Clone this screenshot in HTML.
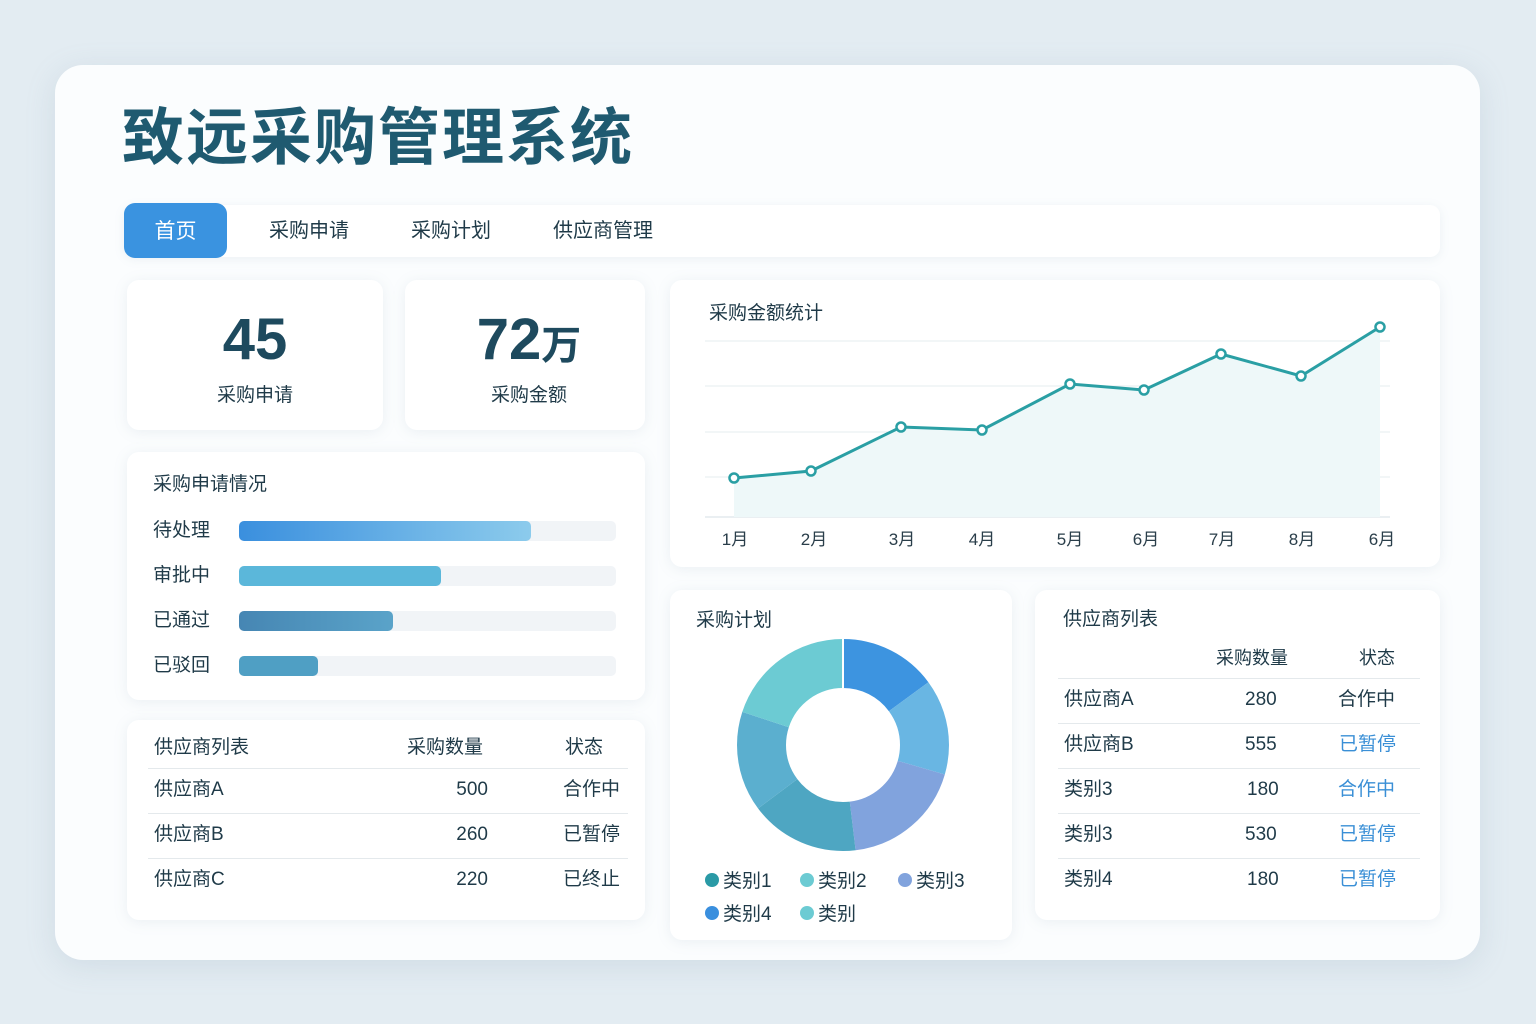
<!DOCTYPE html>
<html><head><meta charset="utf-8"><style>
*{margin:0;padding:0;box-sizing:border-box}
body{width:1536px;height:1024px;background:#e3ecf2;font-family:"Liberation Sans","Noto Sans CJK SC",sans-serif;color:#1f3f50;position:relative;overflow:hidden}
.main{position:absolute;left:55px;top:65px;width:1425px;height:895px;background:#fbfdfe;border-radius:28px;box-shadow:0 6px 30px rgba(120,150,170,.18)}
.card{position:absolute;background:#fff;border-radius:12px;box-shadow:0 2px 14px rgba(120,150,170,.13)}
.abs{position:absolute;line-height:24px}
.t{font-size:19px;color:#1f3a48}
</style></head><body>
<div class="main"></div>
<div class="abs" style="left:122px;top:104px;font-size:62px;line-height:70px;font-weight:bold;color:#1f5a70;letter-spacing:2px">致远采购管理系统</div>
<div class="abs" style="left:124px;top:205px;width:1316px;height:52px;background:#fff;border-radius:10px;box-shadow:0 2px 10px rgba(120,150,170,.12)"></div>
<div class="abs" style="left:124px;top:203px;width:103px;height:55px;background:#3a93e0;border-radius:11px;color:#fff;font-size:21px;text-align:center;line-height:57px">首页</div>
<div class="abs t" style="left:269px;top:219px;font-size:20px">采购申请</div>
<div class="abs t" style="left:411px;top:219px;font-size:20px">采购计划</div>
<div class="abs t" style="left:553px;top:219px;font-size:20px">供应商管理</div>

<div class="card" style="left:127px;top:280px;width:256px;height:150px"></div>
<div class="abs" style="left:127px;top:310px;width:256px;text-align:center;font-size:58px;line-height:60px;font-weight:bold;color:#1e4a5e">45</div>
<div class="abs t" style="left:127px;top:384px;width:256px;text-align:center">采购申请</div>
<div class="card" style="left:405px;top:280px;width:240px;height:150px"></div>
<div class="abs" style="left:405px;top:310px;width:248px;text-align:center;font-size:58px;line-height:60px;font-weight:bold;color:#1e4a5e">72<span style="font-size:40px">万</span></div>
<div class="abs t" style="left:405px;top:384px;width:248px;text-align:center">采购金额</div>

<div class="card" style="left:670px;top:280px;width:770px;height:287px"></div>
<div class="abs t" style="left:709px;top:302px">采购金额统计</div>
<svg class="abs" style="left:0;top:0" width="1536" height="1024">
<g stroke="#e6ecef" stroke-width="1"><line x1="705" y1="341" x2="1390" y2="341"/><line x1="705" y1="386" x2="1390" y2="386"/><line x1="705" y1="432" x2="1390" y2="432"/><line x1="705" y1="477" x2="1390" y2="477"/><line x1="705" y1="517" x2="1390" y2="517" stroke="#d6dfe4"/></g>
<polygon fill="#eef8f9" points="734,478 811,471 901,427 982,430 1070,384 1144,390 1221,354 1301,376 1380,327 1380,517 734,517"/>
<polyline fill="none" stroke="#2a9fa4" stroke-width="3" points="734,478 811,471 901,427 982,430 1070,384 1144,390 1221,354 1301,376 1380,327"/>
<g fill="#fff" stroke="#2a9fa4" stroke-width="2.5"><circle cx="734" cy="478" r="4.5"/><circle cx="811" cy="471" r="4.5"/><circle cx="901" cy="427" r="4.5"/><circle cx="982" cy="430" r="4.5"/><circle cx="1070" cy="384" r="4.5"/><circle cx="1144" cy="390" r="4.5"/><circle cx="1221" cy="354" r="4.5"/><circle cx="1301" cy="376" r="4.5"/><circle cx="1380" cy="327" r="4.5"/></g>
<g font-size="17" fill="#2a3e4a" text-anchor="middle" font-family="Liberation Sans,Noto Sans CJK SC,sans-serif"><text x="735" y="545">1月</text><text x="814" y="545">2月</text><text x="902" y="545">3月</text><text x="982" y="545">4月</text><text x="1070" y="545">5月</text><text x="1146" y="545">6月</text><text x="1222" y="545">7月</text><text x="1302" y="545">8月</text><text x="1382" y="545">6月</text></g>
</svg>

<div class="card" style="left:127px;top:452px;width:518px;height:248px"></div>
<div class="abs t" style="left:153px;top:473px">采购申请情况</div>
<div class="abs t" style="left:153px;top:519px">待处理</div>
<div class="abs t" style="left:153px;top:564px">审批中</div>
<div class="abs t" style="left:153px;top:609px">已通过</div>
<div class="abs t" style="left:153px;top:654px">已驳回</div>
<div class="abs" style="left:239px;top:521px;width:377px;height:20px;background:#f1f4f7;border-radius:5px"></div>
<div class="abs" style="left:239px;top:521px;width:292px;height:20px;background:linear-gradient(90deg,#3a8fde,#8ccbec);border-radius:5px"></div>
<div class="abs" style="left:239px;top:566px;width:377px;height:20px;background:#f1f4f7;border-radius:5px"></div>
<div class="abs" style="left:239px;top:566px;width:202px;height:20px;background:#5bb7da;border-radius:5px"></div>
<div class="abs" style="left:239px;top:611px;width:377px;height:20px;background:#f1f4f7;border-radius:5px"></div>
<div class="abs" style="left:239px;top:611px;width:154px;height:20px;background:linear-gradient(90deg,#4686b3,#5aa3c9);border-radius:5px"></div>
<div class="abs" style="left:239px;top:656px;width:377px;height:20px;background:#f1f4f7;border-radius:5px"></div>
<div class="abs" style="left:239px;top:656px;width:79px;height:20px;background:#4f9fc4;border-radius:5px"></div>

<div class="card" style="left:127px;top:720px;width:518px;height:200px"></div>
<div style="position:absolute;left:148px;top:736px;width:480px;font-size:19px;color:#1f3a48">
<div style="height:33px;border-bottom:1px solid #e4e9ec;position:relative"><span class="abs" style="left:6px">供应商列表</span><span class="abs" style="left:259px">采购数量</span><span class="abs" style="left:417px">状态</span></div>
<div style="height:45px;border-bottom:1px solid #e4e9ec;position:relative"><span class="abs" style="left:6px;top:9px">供应商A</span><span class="abs" style="right:140px;top:9px">500</span><span class="abs" style="left:415px;top:9px">合作中</span></div>
<div style="height:45px;border-bottom:1px solid #e4e9ec;position:relative"><span class="abs" style="left:6px;top:9px">供应商B</span><span class="abs" style="right:140px;top:9px">260</span><span class="abs" style="left:415px;top:9px">已暂停</span></div>
<div style="height:45px;position:relative"><span class="abs" style="left:6px;top:9px">供应商C</span><span class="abs" style="right:140px;top:9px">220</span><span class="abs" style="left:415px;top:9px">已终止</span></div>
</div>

<div class="card" style="left:670px;top:590px;width:342px;height:350px"></div>
<div class="abs t" style="left:696px;top:609px">采购计划</div>
<svg class="abs" style="left:0;top:0" width="1536" height="1024">
<g transform="rotate(-90 843 745)" fill="none" stroke-width="49">
<circle cx="843" cy="745" r="81.5" stroke="#3d94e0" stroke-dasharray="76.3 512.1"/>
<circle cx="843" cy="745" r="81.5" stroke="#69b6e3" stroke-dasharray="0 76.3 74.6 512.1"/>
<circle cx="843" cy="745" r="81.5" stroke="#81a3dd" stroke-dasharray="0 150.9 95.3 512.1"/>
<circle cx="843" cy="745" r="81.5" stroke="#4ea6c2" stroke-dasharray="0 246.2 85.4 512.1"/>
<circle cx="843" cy="745" r="81.5" stroke="#5bafcf" stroke-dasharray="0 331.6 78.2 512.1"/>
<circle cx="843" cy="745" r="81.5" stroke="#6ccbd3" stroke-dasharray="0 409.8 102.3 512.1"/>
</g>
<g stroke="#fff" stroke-width="2"><line x1="843" y1="639" x2="843" y2="688"/></g>
<g font-size="19" fill="#1f3a48" font-family="Liberation Sans,Noto Sans CJK SC,sans-serif">
<circle cx="712" cy="880" r="7" fill="#2a9aa6"/><text x="723" y="887">类别1</text>
<circle cx="807" cy="880" r="7" fill="#6ccbd3"/><text x="818" y="887">类别2</text>
<circle cx="905" cy="880" r="7" fill="#81a3dd"/><text x="916" y="887">类别3</text>
<circle cx="712" cy="913" r="7" fill="#3a8fde"/><text x="723" y="920">类别4</text>
<circle cx="807" cy="913" r="7" fill="#6ccbd3"/><text x="818" y="920">类别</text>
</g>
</svg>

<div class="card" style="left:1035px;top:590px;width:405px;height:330px"></div>
<div class="abs t" style="left:1063px;top:608px">供应商列表</div>
<div style="position:absolute;left:1058px;top:646px;width:362px;font-size:19px;color:#1f3a48">
<div style="height:33px;border-bottom:1px solid #e4e9ec;position:relative;font-size:18px"><span class="abs" style="left:158px">采购数量</span><span class="abs" style="left:301px">状态</span></div>
<div style="height:45px;border-bottom:1px solid #e4e9ec;position:relative"><span class="abs" style="left:6px;top:9px">供应商A</span><span class="abs" style="left:187px;top:9px">280</span><span class="abs" style="left:280px;top:9px">合作中</span></div>
<div style="height:45px;border-bottom:1px solid #e4e9ec;position:relative"><span class="abs" style="left:6px;top:9px">供应商B</span><span class="abs" style="left:187px;top:9px">555</span><span class="abs" style="left:281px;top:9px;color:#3a8fd6">已暂停</span></div>
<div style="height:45px;border-bottom:1px solid #e4e9ec;position:relative"><span class="abs" style="left:6px;top:9px">类别3</span><span class="abs" style="left:189px;top:9px">180</span><span class="abs" style="left:280px;top:9px;color:#3a8fd6">合作中</span></div>
<div style="height:45px;border-bottom:1px solid #e4e9ec;position:relative"><span class="abs" style="left:6px;top:9px">类别3</span><span class="abs" style="left:187px;top:9px">530</span><span class="abs" style="left:281px;top:9px;color:#3a8fd6">已暂停</span></div>
<div style="height:45px;position:relative"><span class="abs" style="left:6px;top:9px">类别4</span><span class="abs" style="left:189px;top:9px">180</span><span class="abs" style="left:281px;top:9px;color:#3a8fd6">已暂停</span></div>
</div>
</body></html>
